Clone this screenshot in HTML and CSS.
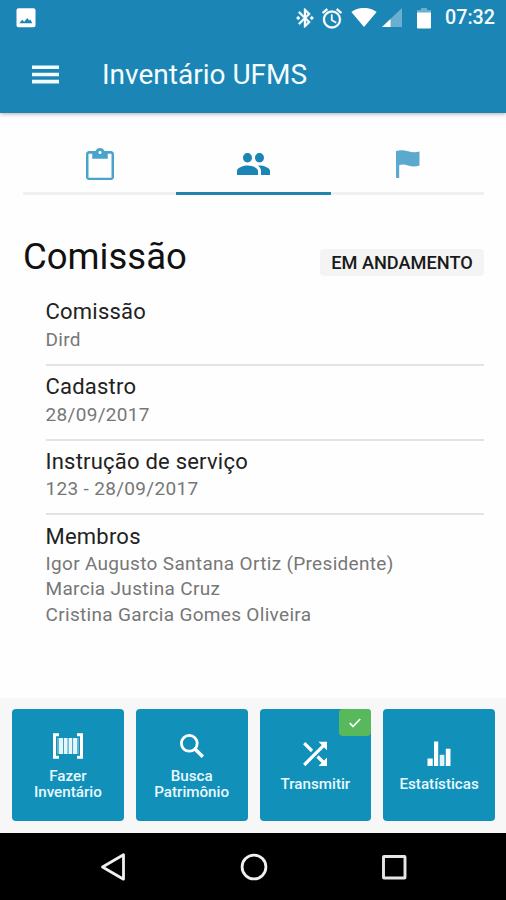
FILE: index.html
```html
<!DOCTYPE html>
<html lang="pt-BR">
<head>
<meta charset="utf-8">
<title>Inventário UFMS</title>
<link rel="stylesheet" href="styles.css">
</head>
<body>
<header class="header">
  <div class="status">
    <svg class="photo" width="20" height="20" viewBox="0 0 20 20"><rect x=".5" y=".3" width="19" height="19" rx="2" fill="#fff"/><path d="M3.3 15.3 L6.2 11.8 L8.2 13.8 L11.4 10 L13 12.6 L14.2 11.6 L16.4 15.3Z" fill="#1b86b5"/></svg>
    <svg class="bluetooth" width="18" height="20" viewBox="2.7 1.5 18.6 21" preserveAspectRatio="none"><path fill="#fff" stroke="#fff" stroke-width=".4" d="M7 12l-2-2-2 2 2 2 2-2zm10.71-4.29L12 2h-1v7.59L6.41 5 5 6.41 10.59 12 5 17.59 6.41 19 11 14.41V22h1l5.71-5.71-4.3-4.29 4.3-4.29zM13 5.83l1.88 1.88L13 9.59V5.83zm1.88 10.46L13 18.17v-3.76l1.88 1.88zM19 10l-2 2 2 2 2-2-2-2z"/></svg>
    <svg class="alarm" width="20" height="21" viewBox="2 1.5 20 21"><path fill="#fff" stroke="#fff" stroke-width=".3" d="M22 5.72l-4.6-3.86-1.29 1.53 4.6 3.86L22 5.72zM7.88 3.39L6.6 1.86 2 5.71l1.29 1.53 4.59-3.85zM12.5 8H11v6l4.75 2.85.75-1.23-4-2.37V8zM12 4c-4.97 0-9 4.03-9 9s4.02 9 9 9a9 9 0 0 0 0-18zm0 16c-3.87 0-7-3.13-7-7s3.13-7 7-7 7 3.13 7 7-3.13 7-7 7z"/></svg>
    <svg class="wifi" width="26" height="20" viewBox="0 0 26 20"><path fill="#fff" d="M.4 4 C7.5-1.5 18.5-1.5 25.6 4 L13 19Z"/></svg>
    <svg class="signal" width="20" height="20" viewBox="0 0 20 20"><path fill="#6aaed0" d="M0 19 L20 0 V19Z"/><path fill="#fff" d="M0 19 L8.5 10.9 V19Z"/></svg>
    <svg class="battery" width="14" height="21" viewBox="0 0 14 21"><path fill="#6aaed0" d="M4 0h6v2h4v4H0V2h4z"/><path fill="#fff" d="M0 4.500h14V19.500q0 1-1 1H1q-1 0-1-1z"/></svg>
    <span class="time">07:32</span>
  </div>
  <div class="toolbar">
    <svg class="menu" width="27" height="19" viewBox="0 0 27 19"><path stroke="#f2fbff" stroke-width="3.600" d="M0 2.300h27M0 9.500h27M0 16.600h27"/></svg>
    <h1 class="title">Inventário UFMS</h1>
  </div>
</header>
<main class="content">
  <nav class="tabs">
    <div class="tab">
      <svg width="28" height="32" viewBox="3 1 18 21" preserveAspectRatio="none"><path fill="#4aa3cb" d="M19 3h-4.180C14.400 1.840 13.300 1 12 1s-2.400.84-2.820 2H5c-1.100 0-2 .9-2 2v15c0 1.100.9 2 2 2h14c1.100 0 2-.9 2-2V5c0-1.100-.9-2-2-2zm-7 0c.55 0 1 .45 1 1s-.45 1-1 1-1-.45-1-1 .45-1 1-1zm7.400 17.500H4.600V4.700H7V8h10V4.700h2.400z"/></svg>
    </div>
    <div class="tab active">
      <svg width="33" height="22" viewBox="1 5 22 14" preserveAspectRatio="none"><path fill="#1b86b5" d="M16 11c1.660 0 2.990-1.340 2.990-3S17.660 5 16 5s-3 1.340-3 3 1.340 3 3 3zm-8 0c1.660 0 2.990-1.340 2.990-3S9.660 5 8 5 5 6.340 5 8s1.340 3 3 3zm0 2c-2.330 0-7 1.170-7 3.500V19h14v-2.500c0-2.330-4.670-3.500-7-3.500zm8 0c-.29 0-.62.020-.97.050C16.190 13.890 17 15.020 17 16.500V19h6v-2.500c0-2.330-4.670-3.500-7-3.500z"/></svg>
    </div>
    <div class="tab">
      <svg width="24" height="28" viewBox="0 0 24 28"><path fill="#5ba9cc" d="M0 1 Q6-.8 12 1.200 T23.500 1.500 V15.600 Q18 17.500 12 15.500 Q7 13.800 3.200 15.200 V28H0Z"/></svg>
    </div>
  </nav>
  <div class="heading">
    <h2>Comissão</h2>
    <span class="tag">EM ANDAMENTO</span>
  </div>
  <dl class="list">
    <div class="item"><dt>Comissão</dt><dd>Dird</dd></div>
    <div class="item"><dt>Cadastro</dt><dd>28/09/2017</dd></div>
    <div class="item"><dt>Instrução de serviço</dt><dd>123 - 28/09/2017</dd></div>
    <div class="item"><dt>Membros</dt><dd>Igor Augusto Santana Ortiz (Presidente)</dd><dd>Marcia Justina Cruz</dd><dd>Cristina Garcia Gomes Oliveira</dd></div>
  </dl>
</main>
<section class="actions">
  <button class="action">
    <svg width="30" height="26" viewBox="0 0 30 26"><path fill="none" stroke="#fff" stroke-width="3" d="M6 1.700H1.500V24.300H6M24 1.700h4.500V24.300H24"/><path fill="#5fb4d0" d="M4 5h22V21H4z"/><path stroke="#e6f6fd" stroke-width="4" d="M8 5V21M13 5V21M17.500 5V21M22 5V21" stroke-dasharray="none"/><path stroke="#3fa5c7" d="M10.500 5V21M15 5V21M19.600 5V21"/></svg>
    <span>Fazer<br>Inventário</span>
  </button>
  <button class="action">
    <svg width="24" height="26" viewBox="0 0 24 26"><circle cx="9.300" cy="10.300" r="7.900" fill="none" stroke="#fff" stroke-width="2.800"/><path stroke="#fff" stroke-width="3.500" d="M14.500 15.500l8.300 8.300"/></svg>
    <span>Busca<br>Patrimônio</span>
  </button>
  <button class="action">
    <svg width="24" height="26" viewBox="0 0 24 26"><path fill="none" stroke="#fff" stroke-width="3.200" d="M1.200 24 L21 4.200M1.200 2.200 L9 10M14.500 15.500L21 22"/><path fill="#fff" d="M15.500 .8H24V9.300ZM24 16.500V25H15.500Z"/></svg>
    <span>Transmitir</span>
    <i class="badge"><svg width="12" height="10" viewBox="0 0 12 10"><path fill="none" stroke="#fff" stroke-width="1.800" d="M.8 5.200l3.200 3.300L11.200 1"/></svg></i>
  </button>
  <button class="action">
    <svg width="24" height="26" viewBox="0 0 24 26"><path fill="#fff" d="M.5 17.500h5.200V25H.5zM7 .5h4.200V25H7zM18.800 7.800h4.700V25h-4.700z"/><path fill="#e0f3fb" d="M12.700 13.800h4.700V25h-4.700z"/></svg>
    <span>Estatísticas</span>
  </button>
</section>
<footer class="navbar">
  <svg width="26" height="28" viewBox="0 0 26 28"><path fill="none" stroke="#f0f0f0" stroke-width="2.800" stroke-linejoin="round" d="M2.500 14 L23.500 1.800V26.200Z"/></svg>
  <svg width="28" height="28" viewBox="0 0 28 28"><circle cx="14" cy="14" r="11.900" fill="none" stroke="#f0f0f0" stroke-width="2.800"/></svg>
  <svg width="26" height="28" viewBox="0 0 26 28"><rect x="2.500" y="3.500" width="21.500" height="21.500" rx=".5" fill="none" stroke="#e6e6e6" stroke-width="2.900"/></svg>
</footer>
</body>
</html>
```
FILE: styles.css
```css
* { box-sizing: border-box; margin: 0; }
body {
  width: 506px;
  height: 900px;
  display: flex;
  flex-direction: column;
  overflow: hidden;
  background: #fefefe;
  font-family: Roboto, sans-serif;
}
svg { display: block; flex: none; }
.header {
  height: 113px;
  flex: none;
  background: #1b86b5;
  box-shadow: 0 1px 4px rgba(70, 40, 60, .4);
  color: #f5fcff;
}
.status { height: 36px; padding: 0 10px 0 16px; display: flex; align-items: center; }
.bluetooth { margin-left: 260px; }
.alarm { margin-left: 8px; }
.wifi { margin-left: 9px; }
.signal { margin-left: 5px; }
.battery { margin-left: 15px; }
.time { margin-left: 14px; font-size: 19.700px; font-weight: 500; line-height: 36px; white-space: nowrap; }
.toolbar { height: 77px; display: flex; align-items: center; padding-left: 32px; }
.title { margin-left: 43px; font-size: 28px; font-weight: 400; line-height: 36px; }
.content { flex: 1; padding: 19px 22px 0 23px; }
.tabs { height: 63px; display: grid; grid-template-columns: 153px 155px 153px; }
.tab {
  display: flex;
  justify-content: center;
  align-items: center;
  border-bottom: 3px solid #eff0f0;
  padding-top: 4px;
}
.active { border-color: #2583b0; }
.heading { display: flex; justify-content: space-between; height: 96.300px; padding-top: 40px; }
h2 { font-size: 36.500px; font-weight: 400; line-height: 44px; color: #111; }
.tag {
  margin-top: 14px;
  height: 27px;
  width: 164px;
  border-radius: 4px;
  background: #f4f4f4;
  color: #191919;
  font-size: 18.200px;
  font-weight: 500;
  line-height: 27px;
  text-align: center;
}
.list { padding-left: 22.500px; }
.item { height: 74.700px; padding-top: 8.200px; border-bottom: 2px solid #e3e3e3; }
.item:last-child { border: 0; height: auto; }
dt { font-size: 22px; line-height: 26px; height: 27.500px; letter-spacing: .22px; color: #222; }
dd { margin-left: 0; font-size: 19px; line-height: 25.400px; letter-spacing: .32px; color: #777; }
.actions {
  height: 135px;
  flex: none;
  padding: 11px 11px 12px 12px;
  background: #f7f7f7;
  display: grid;
  grid-template-columns: repeat(4, 1fr);
  gap: 12px;
}
.action {
  position: relative;
  display: flex;
  flex-direction: column;
  justify-content: center;
  align-items: center;
  gap: 10px;
  padding: 3px 0 0;
  border: 0;
  border-radius: 4px;
  background: #1191b9;
  color: #e8f8ff;
  font: 500 15.200px/15.400px Roboto, sans-serif;
}
.badge {
  position: absolute;
  top: 0;
  right: 0;
  width: 32px;
  height: 27px;
  border-radius: 4px;
  background: #58b85c;
  display: flex;
  align-items: center;
  justify-content: center;
}
.navbar {
  height: 67px;
  flex: none;
  padding-left: 1px;
  background: #000;
  display: flex;
  align-items: center;
  justify-content: center;
  gap: 113.500px;
}
```
